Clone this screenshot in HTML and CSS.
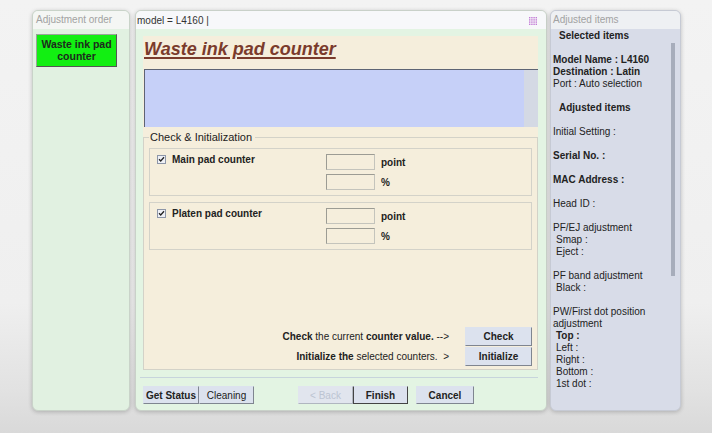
FILE: index.html
```html
<!DOCTYPE html>
<html>
<head>
<meta charset="utf-8">
<link rel="stylesheet" href="styles.css">
</head>
<body>
<div class="app">
  <div class="panel left">
    <div class="panel-head">Adjustment order</div>
    <div class="left-body">
      <div class="step-btn">Waste ink pad<br>counter</div>
    </div>
  </div>

  <div class="panel mid">
    <div class="mid-head">
      <span>model = L4160 |</span>
      <svg class="grip" width="8" height="8" viewBox="0 0 8 8">
        <g fill="#c27cd6">
          <rect x="0" y="0" width="1.4" height="1.4"/><rect x="2.2" y="0" width="1.4" height="1.4"/><rect x="4.4" y="0" width="1.4" height="1.4"/><rect x="6.6" y="0" width="1.4" height="1.4"/>
          <rect x="0" y="2.2" width="1.4" height="1.4"/><rect x="2.2" y="2.2" width="1.4" height="1.4"/><rect x="4.4" y="2.2" width="1.4" height="1.4"/><rect x="6.6" y="2.2" width="1.4" height="1.4"/>
          <rect x="0" y="4.4" width="1.4" height="1.4"/><rect x="2.2" y="4.4" width="1.4" height="1.4"/><rect x="4.4" y="4.4" width="1.4" height="1.4"/><rect x="6.6" y="4.4" width="1.4" height="1.4"/>
          <rect x="0" y="6.6" width="1.4" height="1.4"/><rect x="2.2" y="6.6" width="1.4" height="1.4"/><rect x="4.4" y="6.6" width="1.4" height="1.4"/><rect x="6.6" y="6.6" width="1.4" height="1.4"/>
        </g>
      </svg>
    </div>
    <div class="mid-body">
      <div class="content">
        <div class="title">Waste ink pad counter</div>
        <div class="infobox">
          <div class="info-text"></div>
          <div class="info-track"></div>
        </div>
        <fieldset class="check-init">
          <legend>Check &amp; Initialization</legend>
          <div class="group">
            <label class="chk"><svg width="9" height="9" viewBox="0 0 9 9"><rect x="0.5" y="0.5" width="8" height="8" fill="#eef0f6" stroke="#8d96a8"/><path d="M2 4.3 L3.7 6 L7 2.3" fill="none" stroke="#222" stroke-width="1.3"/></svg><span>Main pad counter</span></label>
            <div class="field"></div><span class="unit">point</span>
            <span></span>
            <div class="field"></div><span class="unit">%</span>
          </div>
          <div class="group">
            <label class="chk"><svg width="9" height="9" viewBox="0 0 9 9"><rect x="0.5" y="0.5" width="8" height="8" fill="#eef0f6" stroke="#8d96a8"/><path d="M2 4.3 L3.7 6 L7 2.3" fill="none" stroke="#222" stroke-width="1.3"/></svg><span>Platen pad counter</span></label>
            <div class="field"></div><span class="unit">point</span>
            <span></span>
            <div class="field"></div><span class="unit">%</span>
          </div>
          <div class="actions">
            <div class="act-row"><span class="act-text"><b>Check</b> the current <b>counter value.</b> --&gt;</span><div class="btn act-btn">Check</div></div>
            <div class="act-row"><span class="act-text"><b>Initialize the</b> selected counters. &nbsp;&gt;</span><div class="btn act-btn">Initialize</div></div>
          </div>
        </fieldset>
      </div>
      <div class="sep"></div>
      <div class="bottom-bar">
        <div class="btn b-status"><b>Get Status</b></div>
        <div class="btn b-clean">Cleaning</div>
        <div class="btn b-back">&lt; Back</div>
        <div class="btn b-finish">Finish</div>
        <div class="btn b-cancel">Cancel</div>
      </div>
    </div>
  </div>

  <div class="panel right">
    <div class="panel-head">Adjusted items</div>
    <div class="right-body">
      <div class="items">
        <div class="ind">Selected items</div>
        <div class="gap"></div>
        <div class="b">Model Name : L4160</div>
        <div class="b">Destination : Latin</div>
        <div>Port : Auto selection</div>
        <div class="gap"></div>
        <div class="ind">Adjusted items</div>
        <div class="gap"></div>
        <div>Initial Setting :</div>
        <div class="gap"></div>
        <div class="b">Serial No. :</div>
        <div class="gap"></div>
        <div class="b">MAC Address :</div>
        <div class="gap"></div>
        <div>Head ID :</div>
        <div class="gap"></div>
        <div>PF/EJ adjustment</div>
        <div class="sub">Smap :</div>
        <div class="sub">Eject :</div>
        <div class="gap"></div>
        <div>PF band adjustment</div>
        <div class="sub">Black :</div>
        <div class="gap"></div>
        <div>PW/First dot position</div>
        <div>adjustment</div>
        <div class="sub b">Top :</div>
        <div class="sub">Left :</div>
        <div class="sub">Right :</div>
        <div class="sub">Bottom :</div>
        <div class="sub">1st dot :</div>
      </div>
      <div class="vscroll"></div>
    </div>
  </div>
</div>
</body>
</html>
```

FILE: styles.css
```css
* { box-sizing: border-box; }
html, body { margin: 0; height: 100%; }
body {
  width: 712px;
  height: 433px;
  overflow: hidden;
  font-family: "Liberation Sans", Arial, sans-serif;
  font-size: 10px;
  color: #222;
  background: linear-gradient(180deg, #f3f3f3 0%, #efefef 70%, #e2e2e2 90%, #d9d9d9 100%);
}
.app {
  display: flex;
  align-items: flex-start;
  padding: 10px 0 0 32px;
}
.panel {
  height: 401px;
  display: flex;
  flex-direction: column;
  border-radius: 6px;
  overflow: hidden;
  box-shadow: 0 1px 4px rgba(0,0,0,0.22);
}
.panel-head {
  height: 18px;
  line-height: 18px;
  padding-left: 3px;
  color: #a2a2a2;
  background: #f5f6f6;
  white-space: nowrap;
}

/* left */
.left { width: 98px; background: #e1f1e1; border: 1px solid #c9d3c9; }
.left .panel-head { background: #f4f6f4; }
.left-body { flex: 1; padding: 5px 12px 0 3px; }
.step-btn {
  width: 81px;
  height: 33px;
  background: #12ef12;
  border: 1px solid #9aa59a;
  border-right-color: #555;
  border-bottom-color: #555;
  text-align: center;
  font-weight: bold;
  font-size: 10.5px;
  line-height: 12px;
  padding-top: 3px;
  color: #1d2a1d;
}

/* middle */
.mid { width: 412px; margin-left: 5px; background: #e3f4e3; border: 1px solid #c9d1c9; }
.mid-head {
  height: 18px;
  display: flex;
  align-items: center;
  justify-content: space-between;
  padding: 0 9px 0 1px;
  background: #f7f8fa;
  color: #333;
}
.grip { margin-top: 1px; }
.mid-body { flex: 1; display: flex; flex-direction: column; padding: 7px 8px 0 7px; }
.content {
  height: 334px;
  background: #f5eedc;
  display: flex;
  flex-direction: column;
}
.title {
  height: 30px;
  line-height: 27px;
  padding-left: 1px;
  font-size: 18px;
  font-weight: bold;
  font-style: italic;
  text-decoration: underline;
  text-decoration-thickness: 2px;
  text-underline-offset: 2px;
  color: #7a3b2c;
}
.infobox {
  height: 58px;
  margin: 3px 0 0 1px;
  display: flex;
  border-top: 1px solid #5d6474;
  border-left: 1px solid #5d6474;
}
.info-text { flex: 1; background: #c6d0f8; }
.info-track { width: 14px; background: #d4d9e4; }
.check-init {
  flex: 1;
  margin: 4px 0 0 0;
  padding: 5px 5px 3px 5px;
  border: 1px solid #d3d2c8;
  min-width: 0;
}
.check-init legend {
  font-size: 11px;
  line-height: 12px;
  padding: 0 3px 0 1px;
  margin-left: 0;
  color: #222;
}
.group {
  display: grid;
  grid-template-columns: 163px 49px auto;
  column-gap: 6px;
  row-gap: 4px;
  align-items: center;
  border: 1px solid #d3d2c9;
  padding: 5px 0 5px 7px;
  margin-bottom: 6px;
}
.chk {
  display: flex;
  align-items: flex-start;
  gap: 6px;
  font-weight: bold;
  align-self: start;
  padding-top: 1px;
}
.chk span { margin-top: -1px; }
.field {
  height: 16px;
  border: 1px solid #c4c4bc;
  border-top-color: #9c9c94;
  border-left-color: #9c9c94;
  background: #f5eedc;
}
.unit { font-weight: bold; }
.actions { margin-top: 77px; display: flex; flex-direction: column; gap: 1px; }
.act-row { display: flex; justify-content: flex-end; align-items: center; }
.act-text { margin-right: 16px; white-space: nowrap; }
.btn {
  height: 18px;
  line-height: 17px;
  text-align: center;
  background: #dce2ee;
  border: 1px solid #dce2ee;
  border-right-color: #7f8590;
  border-bottom-color: #7f8590;
  white-space: nowrap;
}
.act-btn { width: 67px; height: 19px; line-height: 18px; font-weight: bold; }
.sep { height: 1px; background: #c7d4dc; margin: 7px 0 0 -3px; }
.bottom-bar { display: flex; margin-top: 8px; }
.b-status { width: 56px; }
.b-clean { width: 55px; }
.b-back { width: 55px; margin-left: 44px; color: #bcc4d2; background: #e1e5ee; border-color: #e1e5ee; border-right-color: #b0b6c0; border-bottom-color: #b0b6c0; }
.b-finish { width: 55px; font-weight: bold; border-left-color: #444; border-top-color: #dce2ee; border-right-color: #444; border-bottom-color: #444; }
.b-cancel { width: 58px; margin-left: 8px; font-weight: bold; }

/* right */
.right { width: 131px; margin-left: 3px; background: #d8dce8; border: 1px solid #c6cad4; }
.right .panel-head { background: #eef0f3; padding-left: 2px; }
.right-body { flex: 1; display: flex; }
.items { flex: 1; padding: 1px 0 0 2px; line-height: 12px; color: #222; white-space: nowrap; }
.items .gap { height: 12px; }
.items .b { font-weight: bold; }
.items .ind { padding-left: 6px; font-weight: bold; }
.items .sub { padding-left: 3px; }
.vscroll { width: 4px; height: 233px; margin: 14px 5px 0 0; background: #a7adbb; }
```
